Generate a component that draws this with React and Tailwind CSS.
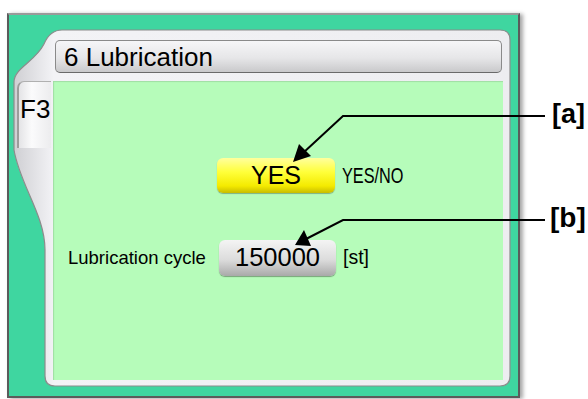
export default function App() {
  const font = { fontFamily: '"Liberation Sans", Arial, sans-serif' };
  return (
    <div className="relative h-[399px] w-[588px] overflow-hidden bg-white pl-[7px] pt-[13px]" style={font}>
      {/* teal frame */}
      <div className="relative h-[385px] w-[513px] border-2 border-[#5b5b5b] border-t-[#9a9a9a] bg-[#3fd6a0] shadow-[3px_1px_4px_rgba(0,0,0,0.35)]">
        <svg className="absolute left-0 top-0" width="509" height="381" viewBox="9 15 509 381">
          <defs>
            <linearGradient id="bezel" x1="0" y1="0" x2="1" y2="0">
              <stop offset="0" stopColor="#cfcfd3" />
              <stop offset="0.08" stopColor="#f3f3f6" />
              <stop offset="1" stopColor="#ededf0" />
            </linearGradient>
          </defs>
          <path
            d="M 62 30 L 500 30 Q 510 30 510 40 L 510 376 Q 510 386 500 386 L 55 386 Q 45 386 45 376 L 45 250 C 45 215 20 185 14 150 L 14 82 C 14 68 35 62 44 44 Q 50 30 62 30 Z"
            fill="url(#bezel)"
            stroke="#8c8c8c"
            strokeWidth="1.2"
          />
        </svg>

        <div className="relative flex flex-col">
          {/* title bar */}
          <div className="ml-[46px] mt-[25px] flex h-[33px] w-[447px] items-center rounded-[5px] border border-[#8a8a8a] border-b-[#6a6a6a] bg-[linear-gradient(#f6f6f8,#e6e6e8_55%,#c9c9cb)] pl-[8px] pt-[1px] text-[26px] leading-none text-black">
            6 Lubrication
          </div>

          <div className="mt-[8px] flex">
            {/* F3 tab */}
            <div className="ml-[8px] h-[67px] w-[34px] rounded-tl-[7px] border-l-2 border-t border-[#9c9c9c] border-t-[#b0b0b0] bg-[linear-gradient(90deg,#e4e4e6,#fbfbfc_40%,#ececee)] pl-[1px] pt-[14px] text-[26px] leading-none text-black">
              F3
            </div>

            {/* green panel */}
            <div className="ml-[2px] h-[299px] w-[450px] bg-[#b6fcba] shadow-[inset_1px_1px_1px_rgba(0,0,0,0.12)]">
              <div className="ml-[164px] mt-[77px] flex items-center">
                <div className="flex h-[35px] w-[118px] items-center justify-center rounded-[6px] bg-[linear-gradient(#ffff9e,#ffff3a_40%,#f4ea00_80%,#c8bc00)] text-[25px] leading-none text-black shadow-[0_1px_1px_rgba(0,0,0,0.3)]">
                  YES
                </div>
                <div className="ml-[7px] origin-left scale-x-[0.74] whitespace-nowrap text-[22px] leading-none text-black">
                  YES/NO
                </div>
              </div>

              <div className="mt-[47px] flex items-center">
                <div className="w-[166px] whitespace-nowrap pl-[15px] text-[18.5px] leading-none text-black">
                  Lubrication cycle
                </div>
                <div className="flex h-[36px] w-[117px] items-center justify-center rounded-[6px] bg-[linear-gradient(#f4f4f4,#dcdcdc_55%,#a9a9a9)] text-[25.5px] leading-none text-black shadow-[0_1px_1px_rgba(0,0,0,0.35)]">
                  150000
                </div>
                <div className="ml-[7px] text-[19.5px] leading-none text-black">[st]</div>
              </div>
            </div>
          </div>
        </div>
      </div>

      {/* callouts */}
      <svg className="pointer-events-none absolute left-0 top-0" width="588" height="399" viewBox="0 0 588 399">
        <polyline points="545,116 343,116 303,153" fill="none" stroke="#000" strokeWidth="2" />
        <polygon points="293,162 299,144 311,156" fill="#000" />
        <polyline points="545,220 343,220 306,239" fill="none" stroke="#000" strokeWidth="2" />
        <polygon points="295,245 304,230 311,246" fill="#000" />
      </svg>
      <div className="absolute left-[552px] top-[101px] text-[27px] font-bold leading-none text-black">[a]</div>
      <div className="absolute left-[550px] top-[204px] text-[28px] font-bold leading-none text-black">[b]</div>
    </div>
  );
}
